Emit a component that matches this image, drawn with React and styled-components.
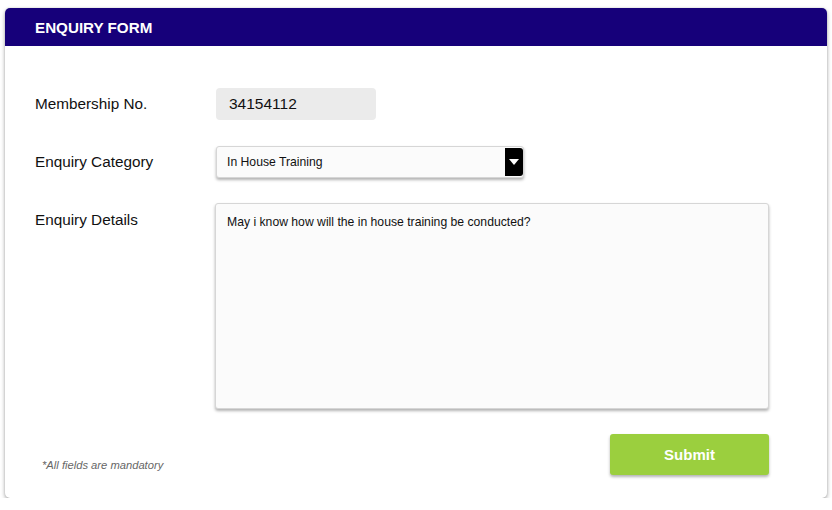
import React from "react";
import styled, { createGlobalStyle } from "styled-components";

const GlobalStyle = createGlobalStyle`
  body {
    margin: 0;
    background: #ffffff;
    font-family: "Liberation Sans", Arial, sans-serif;
  }
`;

const Card = styled.div`
  margin: 8px 0 0 5px;
  width: 822px;
  height: 490px;
  background: #fff;
  border-radius: 5px;
  box-shadow: 0 2px 4px rgba(0, 0, 0, 0.35), 0 0 2px rgba(0, 0, 0, 0.12);
  display: flex;
  flex-direction: column;
  overflow: hidden;
`;

const Header = styled.div`
  height: 38px;
  background: #16007a;
  color: #fff;
  display: flex;
  align-items: center;
  padding-left: 30px;
  font-size: 15.2px;
  font-weight: bold;
`;

const Body = styled.div`
  flex: 1;
  display: flex;
  flex-direction: column;
  padding: 42px 58px 23px 30px;
`;

const Row = styled.div`
  display: grid;
  grid-template-columns: 181px 1fr;
  align-items: ${p => (p.top ? "start" : "center")};
  margin-bottom: ${p => p.gap || 0}px;
`;

const Label = styled.div`
  font-size: 15.3px;
  color: #111;
  padding-top: ${p => (p.top ? 8 : 0)}px;
`;

const ReadOnly = styled.div`
  width: 160px;
  height: 32px;
  box-sizing: border-box;
  background: #ebebeb;
  border-radius: 4px;
  display: flex;
  align-items: center;
  padding-left: 13px;
  font-size: 15.5px;
  color: #111;
`;

const Select = styled.div`
  width: 308px;
  height: 32px;
  box-sizing: border-box;
  background: #fbfbfb;
  border: 1px solid #d6d6d6;
  border-radius: 3px;
  box-shadow: 0 2px 3px rgba(0, 0, 0, 0.3);
  display: flex;
  align-items: center;
  justify-content: space-between;
  padding: 1px 0 1px 10px;
  font-size: 12.2px;
  color: #111;
`;

const Arrow = styled.div`
  width: 18px;
  height: 100%;
  background: #000;
  border-radius: 0 3px 3px 0;
  display: flex;
  align-items: center;
  justify-content: center;
`;

const TextArea = styled.div`
  margin-left: -1px;
  width: 554px;
  height: 206px;
  box-sizing: border-box;
  background: #fbfbfb;
  border: 1px solid #d6d6d6;
  border-radius: 3px;
  box-shadow: 0 2px 3px rgba(0, 0, 0, 0.3);
  padding: 11px 11px;
  font-size: 12.2px;
  color: #111;
`;

const Footer = styled.div`
  margin-top: auto;
  display: flex;
  justify-content: space-between;
  align-items: flex-end;
`;

const Note = styled.div`
  font-size: 11.2px;
  font-style: italic;
  color: #666;
  padding: 0 0 4px 7px;
`;

const Submit = styled.button`
  width: 159px;
  height: 41px;
  border: none;
  border-radius: 3px;
  background: #9bcf3e;
  color: #fff;
  font-family: inherit;
  font-size: 15px;
  font-weight: bold;
  box-shadow: 0 2px 3px rgba(0, 0, 0, 0.3);
  cursor: pointer;
`;

export default function App() {
  return (
    <>
      <GlobalStyle />
      <Card>
        <Header>ENQUIRY FORM</Header>
        <Body>
          <Row gap={26}>
            <Label>Membership No.</Label>
            <ReadOnly>34154112</ReadOnly>
          </Row>
          <Row gap={25}>
            <Label>Enquiry Category</Label>
            <Select>
              In House Training
              <Arrow>
                <svg width="10" height="6" viewBox="0 0 10 6">
                  <path d="M0 0h10L5 6z" fill="#fff" />
                </svg>
              </Arrow>
            </Select>
          </Row>
          <Row top>
            <Label top>Enquiry Details</Label>
            <TextArea>May i know how will the in house training be conducted?</TextArea>
          </Row>
          <Footer>
            <Note>*All fields are mandatory</Note>
            <Submit>Submit</Submit>
          </Footer>
        </Body>
      </Card>
    </>
  );
}
